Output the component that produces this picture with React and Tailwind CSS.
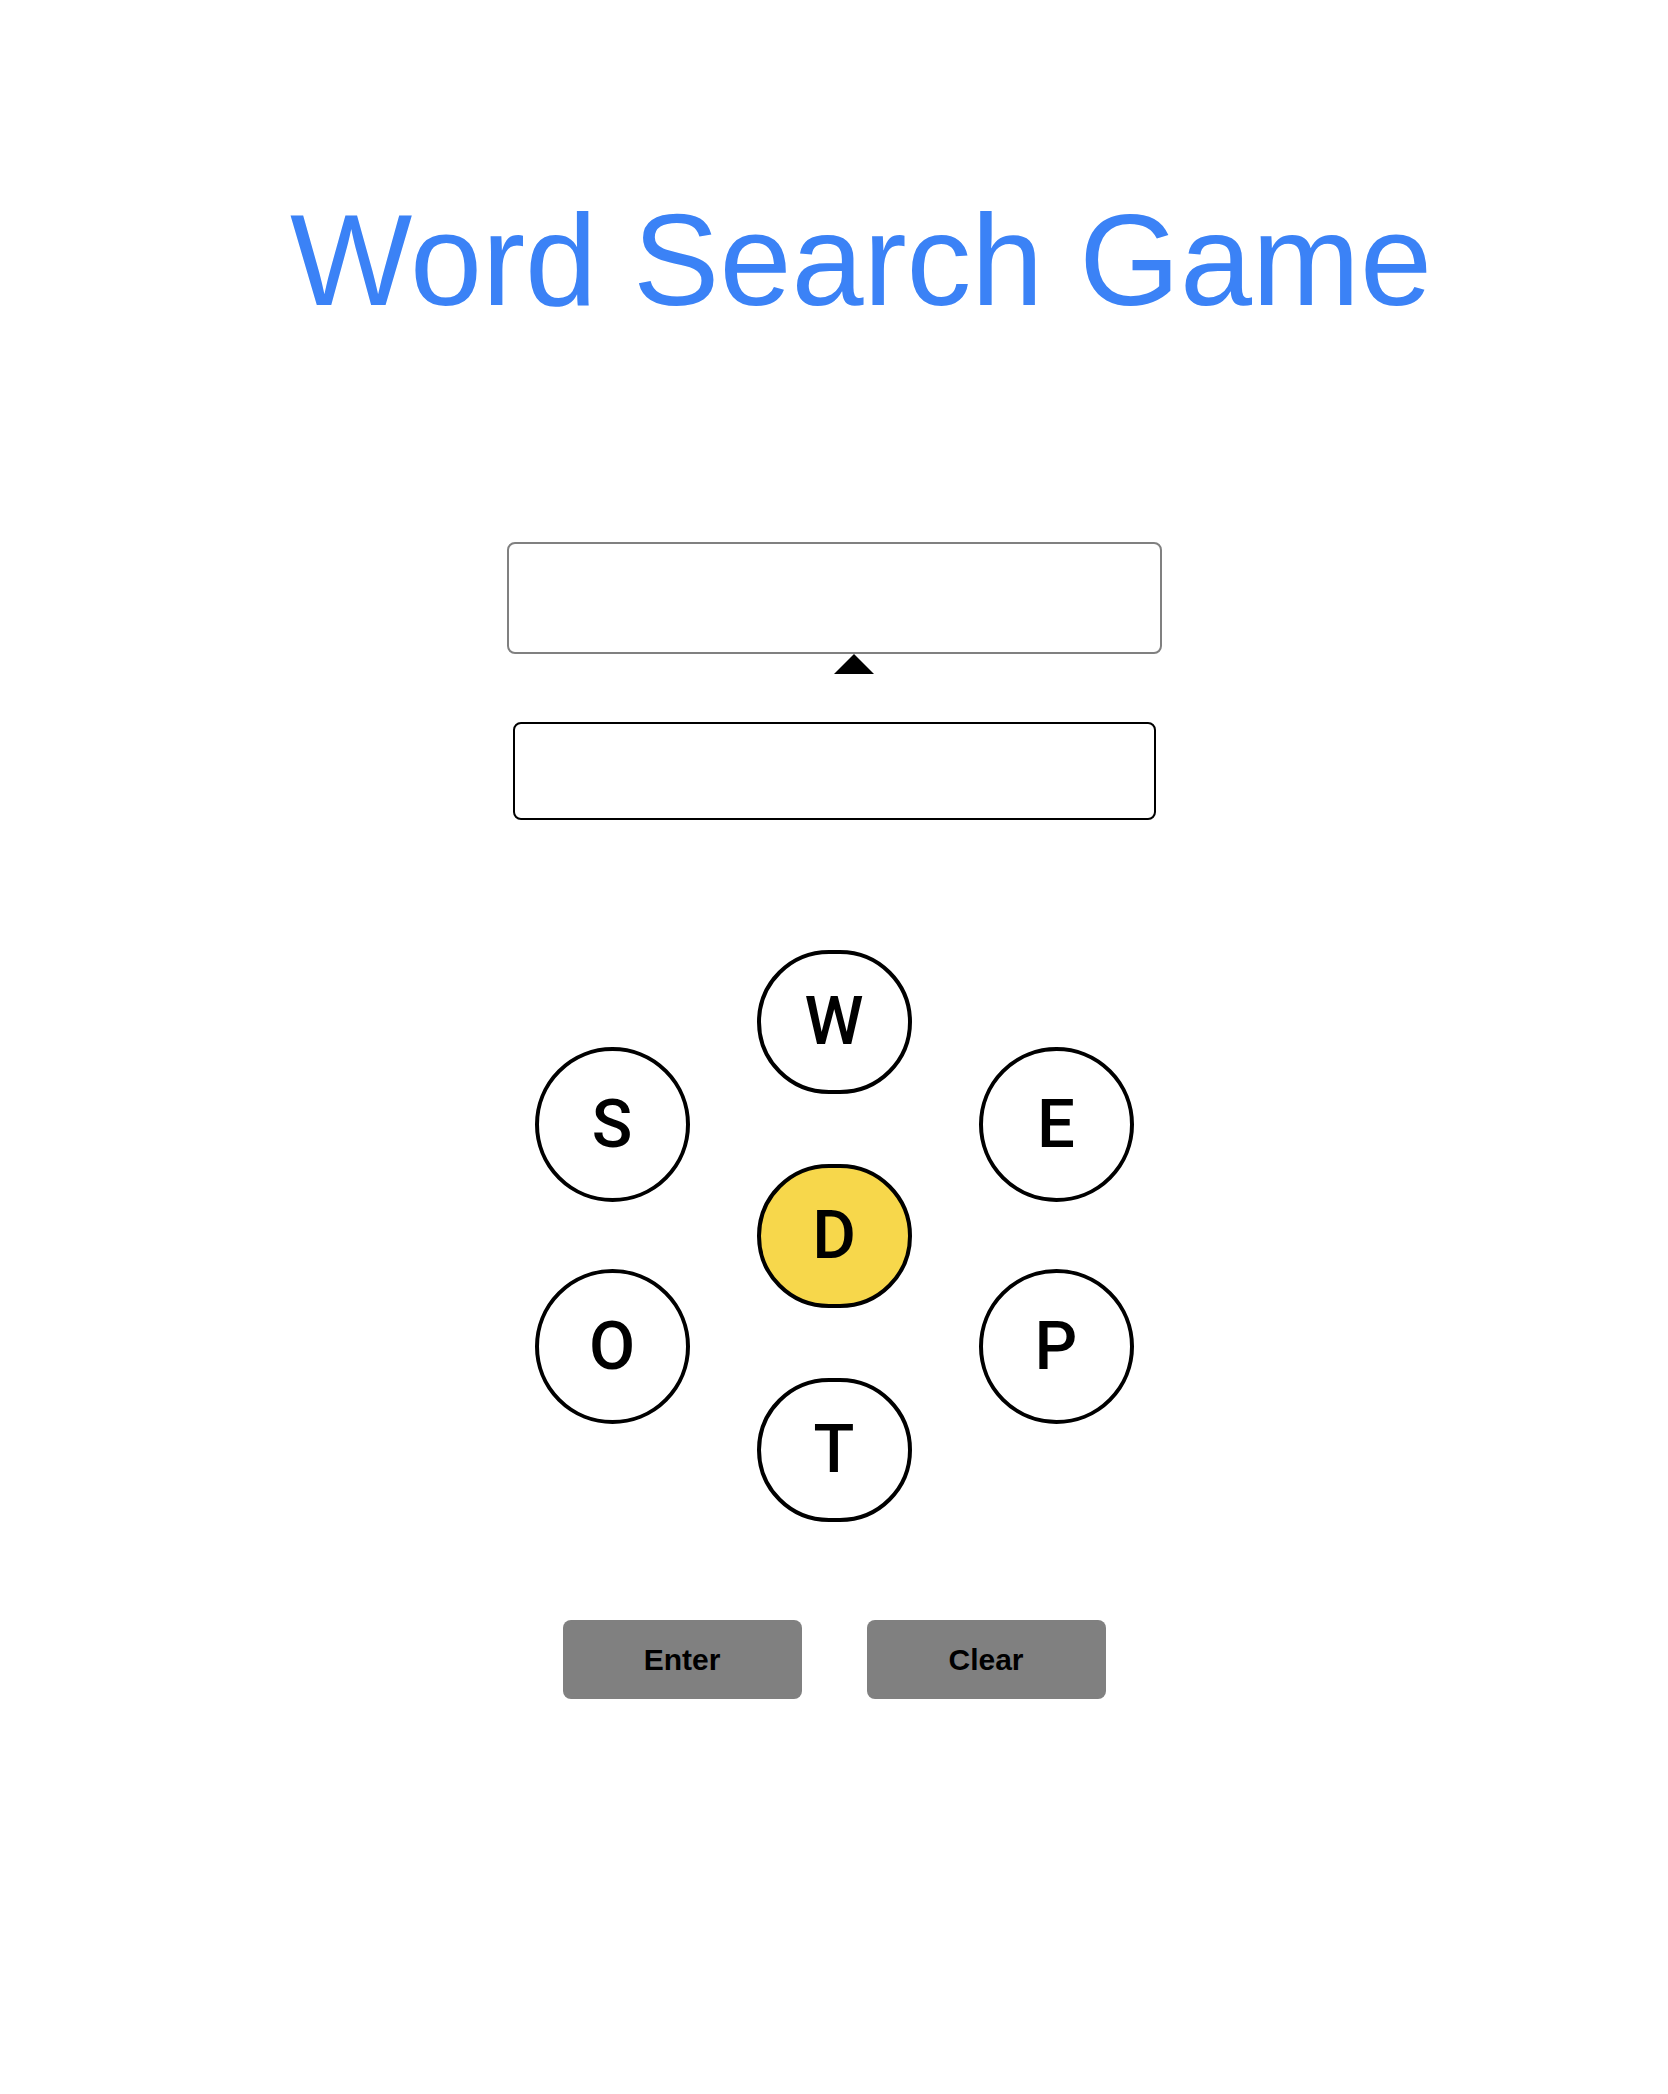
import React from 'react';

const sans = { fontFamily: '"Liberation Sans", Arial, sans-serif' };

const Tile = ({ letter, center, tall }) => (
  <div
    className={`flex w-[155px] items-center justify-center rounded-full border-[4px] border-black text-[67px] font-medium text-black ${
      tall ? 'h-[155px]' : 'h-[144px]'
    } ${center ? 'bg-[#f7d74b]' : 'bg-white'}`}
    style={{ fontFamily: 'Roboto, "Noto Sans", sans-serif' }}
  >
    {letter}
  </div>
);

export default function App() {
  return (
    <div className="flex min-h-screen flex-col items-center bg-white" style={sans}>
      <h1 className="mt-[196px] pl-[54px] text-[129.5px] leading-none font-normal text-[#3b82f6]">
        Word Search Game
      </h1>

      {/* found words panel */}
      <div className="relative mt-[216px] h-[112px] w-[655px] rounded-[8px] border-2 border-[#808080]">
        <div className="absolute top-[calc(100%+2px)] left-1/2 h-0 w-0 border-x-[20px] border-b-[20px] border-x-transparent border-b-black" />
      </div>

      {/* current guess */}
      <div className="mt-[68px] h-[98px] w-[643px] rounded-[8px] border-2 border-black" />

      <div className="mt-[130px] flex items-center gap-[67px]">
        <div className="flex flex-col gap-[67px]">
          <Tile letter="S" tall />
          <Tile letter="O" tall />
        </div>
        <div className="flex flex-col gap-[70px]">
          <Tile letter="W" />
          <Tile letter="D" center />
          <Tile letter="T" />
        </div>
        <div className="flex flex-col gap-[67px]">
          <Tile letter="E" tall />
          <Tile letter="P" tall />
        </div>
      </div>

      <div className="mt-[98px] flex gap-[65px]">
        <button className="h-[79px] w-[239px] rounded-[8px] bg-[#808080] text-[30px] font-bold text-black">
          Enter
        </button>
        <button className="h-[79px] w-[239px] rounded-[8px] bg-[#808080] text-[30px] font-bold text-black">
          Clear
        </button>
      </div>
    </div>
  );
}
